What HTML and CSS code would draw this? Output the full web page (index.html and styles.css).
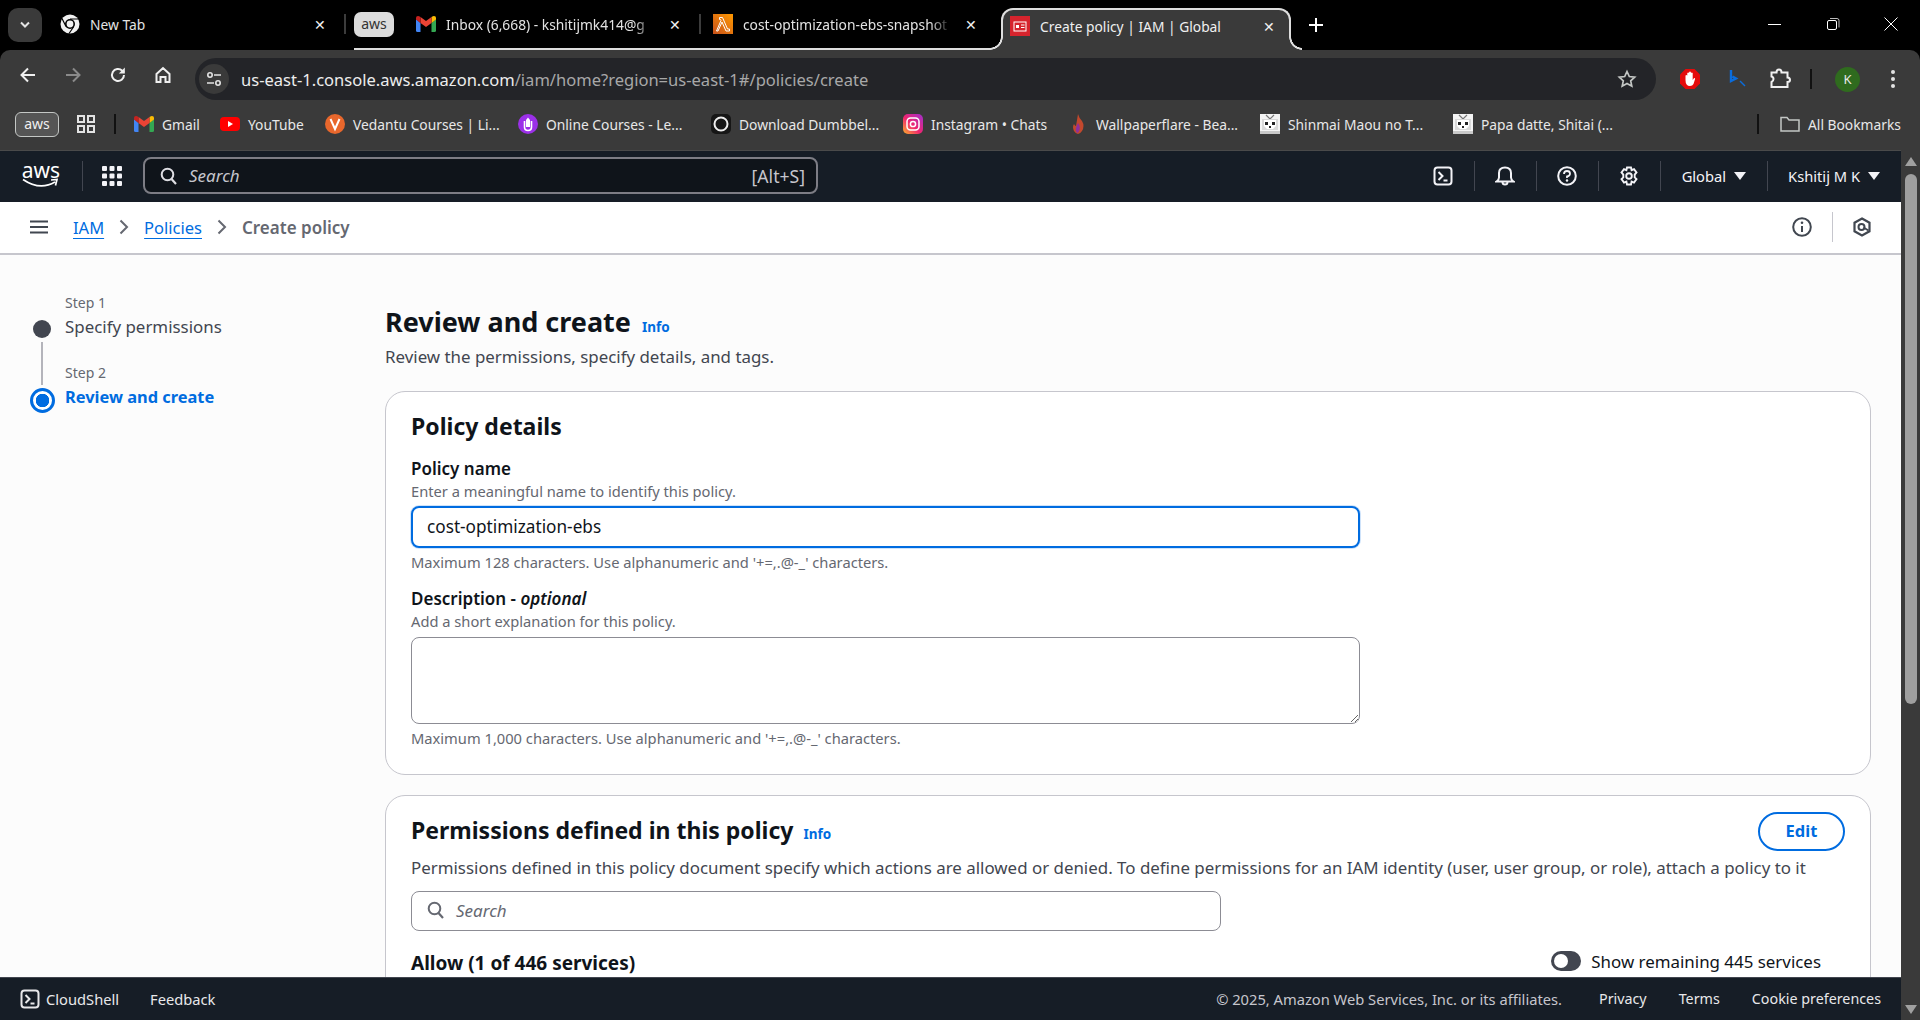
FILE: index.html
```html
<!DOCTYPE html>
<html lang="en">
<head>
  <meta charset="UTF-8" />
  <title>Create policy | IAM | Global</title>
  <link rel="stylesheet" href="styles.css">
</head>
<body>

<svg class="defs" width="0" height="0">
  <symbol id="gmail" viewBox="0 0 20 16">
    <path d="M0 3v11.500q0 1.500 1.500 1.500H4.500V7z" fill="#4285f4"/>
    <path d="M15.500 16h3q1.500 0 1.500-1.500V3l-4.500 4z" fill="#34a853"/>
    <path d="M15.500 1v6L20 3.500V2q0-2-2-2-1 0-2.500 1z" fill="#fbbc04"/>
    <path d="M4.500 7V1L10 5l5.500-4v6L10 11z" fill="#ea4335"/>
    <path d="M0 2v1.500L4.500 7V1Q3 0 2 0 0 0 0 2z" fill="#c5221f"/>
  </symbol>
  <symbol id="shell" viewBox="0 0 20 20">
    <rect x="1.500" y="1.500" width="17" height="17" rx="3" fill="none" stroke="currentColor" stroke-width="2"/>
    <path d="M5.500 6l4 4-4 4M10.500 14.500h4" fill="none" stroke="currentColor" stroke-width="2"/>
  </symbol>
  <symbol id="lens" viewBox="0 0 18 18">
    <circle cx="7.500" cy="7.500" r="5.800" fill="none" stroke="currentColor" stroke-width="2"/>
    <path d="M11.500 12l4.500 5" stroke="currentColor" stroke-width="2.200"/>
  </symbol>
  <symbol id="tv" viewBox="0 0 20 20">
    <rect width="20" height="20" fill="#f4f4f4"/>
    <path d="M6 1l4 4 4-4" fill="none" stroke="#777" stroke-width="1.200"/>
    <rect x="2" y="5" width="16" height="11" fill="#d9d9d9"/>
    <path d="M4 6h12v6l-3 3H7l-3-3z" fill="#fff"/>
    <rect x="5" y="8" width="3" height="3" fill="#222"/>
    <rect x="12" y="8" width="3" height="3" fill="#222"/>
    <rect x="9" y="12" width="2" height="2" fill="#222"/>
    <rect y="17" width="20" height="3" fill="#c9c9c9"/>
  </symbol>
</svg>

<header class="browser">
  <div class="tabstrip">
    <button class="tab-search">
      <svg width="12" height="8" viewBox="0 0 12 8"><path d="M2 1.500l4 4 4-4" fill="none" stroke="#e3e3e3" stroke-width="2"/></svg>
    </button>
    <div class="tab tab-first">
      <svg class="favicon" viewBox="0 0 20 20">
        <circle cx="10" cy="10" r="9.500" fill="#f1f1f1"/>
        <circle cx="10" cy="10" r="5" fill="#000"/>
        <circle cx="10" cy="10" r="3.400" fill="#f1f1f1"/>
        <path d="M10 5h8.500M6 12.500L2 4.500M13.500 13l-4.500 6.500" stroke="#000" stroke-width="1.200"/>
      </svg>
      <span class="tab-title">New Tab</span>
      <span class="tab-close">✕</span>
    </div>
    <div class="tab-sep"></div>
    <div class="tab-group">
      <span class="group-chip">aws</span>
      <div class="tab tab-gmail">
        <svg class="favicon favicon-gmail"><use href="#gmail"/></svg>
        <span class="tab-title tab-fade">Inbox (6,668) - kshitijmk414@g</span>
        <span class="tab-close">✕</span>
      </div>
      <div class="tab-sep"></div>
      <div class="tab tab-lambda">
        <svg class="favicon" viewBox="0 0 20 20">
          <defs><linearGradient id="lam" x1="0" y1="1" x2="1" y2="0"><stop offset="0" stop-color="#c8511b"/><stop offset="1" stop-color="#ff9900"/></linearGradient></defs>
          <rect width="20" height="20" fill="url(#lam)"/>
          <path d="M6.500 3.500h3l5 11.500h2v2h-3.500L9 8l-4 9H3.500L8 6.500 7.500 5.500h-1z" fill="none" stroke="#fff" stroke-width="1"/>
        </svg>
        <span class="tab-title tab-fade">cost-optimization-ebs-snapshot</span>
        <span class="tab-close">✕</span>
      </div>
    </div>
    <div class="tab tab-active">
      <svg class="favicon" viewBox="0 0 20 20">
        <rect width="20" height="20" fill="#d6242d"/>
        <rect x="4" y="6" width="12" height="9" fill="none" stroke="#fff"/>
        <rect x="6" y="9" width="3" height="3" fill="#fff"/>
        <path d="M11 9h3.500M11 11.500h3.500" stroke="#fff"/>
      </svg>
      <span class="tab-title">Create policy | IAM | Global</span>
      <span class="tab-close">✕</span>
    </div>
    <svg class="tab-new" width="14" height="14" viewBox="0 0 14 14"><path d="M7 0v14M0 7h14" stroke="#fff" stroke-width="2"/></svg>
    <div class="window-controls">
      <svg width="14" height="14" viewBox="0 0 14 14"><path d="M0 7.500h13" stroke="#fff"/></svg>
      <svg width="14" height="14" viewBox="0 0 14 14"><rect x="1.500" y="3.500" width="9" height="9" rx="1.500" fill="none" stroke="#fff"/><path d="M4 1.500h7q2 0 2 2v7" fill="none" stroke="#bbb"/></svg>
      <svg width="14" height="14" viewBox="0 0 14 14"><path d="M.5.500l13 13M13.500.500l-13 13" stroke="#fff"/></svg>
    </div>
  </div>

  <div class="toolbar">
    <svg class="tool" viewBox="0 0 18 18"><path d="M16 9H3M9 2.500L2.500 9 9 15.500" fill="none" stroke="#f0f0f0" stroke-width="2"/></svg>
    <svg class="tool" viewBox="0 0 18 18"><path d="M2 9h13M9 2.500L15.500 9 9 15.500" fill="none" stroke="#8a8a8a" stroke-width="2"/></svg>
    <svg class="tool" viewBox="0 0 18 18"><path d="M15 9a6 6 0 1 1-1.800-4.300L15 6.500" fill="none" stroke="#f0f0f0" stroke-width="2"/><path d="M15.800 1.500v6h-6z" fill="#f0f0f0"/></svg>
    <svg class="tool" viewBox="0 0 18 18"><path d="M2.500 8L9 2l6.500 6v8h-4v-5h-5v5h-4z" fill="none" stroke="#f0f0f0" stroke-width="2"/></svg>
    <div class="omnibox">
      <span class="site-info">
        <svg width="18" height="18" viewBox="0 0 18 18"><circle cx="5" cy="5" r="2.200" fill="none" stroke="#e3e3e3" stroke-width="1.600"/><path d="M9 5h7M2 13h7" stroke="#e3e3e3" stroke-width="1.600"/><circle cx="13" cy="13" r="2.200" fill="none" stroke="#e3e3e3" stroke-width="1.600"/></svg>
      </span>
      <span class="url">us-east-1.console.aws.amazon.com<span class="url-path">/iam/home?region=us-east-1#/policies/create</span></span>
      <svg class="star" width="20" height="20" viewBox="0 0 20 20"><path d="M10 2.500l2.300 5 5.400.6-4 3.700 1.100 5.400L10 14.500l-4.800 2.700 1.100-5.400-4-3.700 5.400-.6z" fill="none" stroke="#c4c7c5" stroke-width="1.700"/></svg>
    </div>
    <div class="extensions">
      <svg width="22" height="22" viewBox="0 0 22 22"><path d="M6.500 1h9L21 6.500v9L15.500 21h-9L1 15.500v-9z" fill="#e40b0b"/><path d="M6.500 12V7.500q1-1.200 1.800 0V11V5q1-1.200 1.800 0V11V4q1-1.200 1.800 0V11V5q1-1.200 1.800 0V12l1.200-1.800q1.300-.5 1.200.8L14.500 16q-1 2-3.500 2-4.500 0-4.500-6z" fill="#fff"/></svg>
      <svg width="22" height="22" viewBox="0 0 22 22"><path d="M6 2v11l5-2.500L7.500 8.500" fill="none" stroke="#0a6cdc" stroke-width="2.400"/><path d="M15 13l5 5" stroke="#0a6cdc" stroke-width="1.400"/></svg>
      <svg class="ext-puzzle" width="22" height="22" viewBox="0 0 22 22"><path d="M2.500 4.500h5q0-3 2.500-3t2.500 3h6v5q2.500 0 2.500 2.500s0 2-2.500 2v5h-16v-5q2-1 2-3t-2-2.500z" fill="none" stroke="#f0f0f0" stroke-width="2"/></svg>
      <span class="bar-sep"></span>
      <span class="avatar">K</span>
      <svg width="6" height="20" viewBox="0 0 6 20"><circle cx="3" cy="3" r="2" fill="#e3e3e3"/><circle cx="3" cy="10" r="2" fill="#e3e3e3"/><circle cx="3" cy="17" r="2" fill="#e3e3e3"/></svg>
    </div>
  </div>

  <div class="bookmarks">
    <span class="bm-chip">aws</span>
    <svg class="bm-grid" width="18" height="18" viewBox="0 0 18 18"><path d="M1 1h6v6H1zM11 1h6v6h-6zM1 11h6v6H1zM11 11h6v6h-6z" fill="none" stroke="#e3e3e3" stroke-width="2"/></svg>
    <span class="bar-sep bm-sep"></span>
    <a class="bm bm-gmail"><svg class="bm-icon"><use href="#gmail"/></svg>Gmail</a>
    <a class="bm bm-yt"><svg class="bm-icon" viewBox="0 0 20 20"><rect y="3" width="20" height="14" rx="4" fill="#f00"/><path d="M8 7l5 3-5 3z" fill="#fff"/></svg>YouTube</a>
    <a class="bm bm-ved"><svg class="bm-icon" viewBox="0 0 20 20"><circle cx="10" cy="10" r="10" fill="#e8672c"/><path d="M5.500 5L10 15l4.500-10" fill="none" stroke="#fff" stroke-width="2"/></svg>Vedantu Courses | Li...</a>
    <a class="bm bm-online"><svg class="bm-icon" viewBox="0 0 20 20"><circle cx="10" cy="10" r="10" fill="#9b30e8"/><path d="M6.500 7v6q0 3.500 3.500 3.500t3.500-3.500V7" fill="none" stroke="#fff" stroke-width="1.600"/><path d="M10 3.500l2 2.500v7H8V6z" fill="#fff"/></svg>Online Courses - Le...</a>
    <a class="bm bm-dumb"><svg class="bm-icon" viewBox="0 0 20 20"><rect width="20" height="20" rx="5" fill="#161616"/><circle cx="10" cy="10" r="6.500" fill="none" stroke="#eee" stroke-width="2"/></svg>Download Dumbbel...</a>
    <a class="bm bm-insta">
      <svg class="bm-icon" viewBox="0 0 20 20">
        <defs><linearGradient id="ig" x1="0" y1="1" x2="1" y2="0"><stop offset="0" stop-color="#fdb32a"/><stop offset=".45" stop-color="#f0256e"/><stop offset="1" stop-color="#a02fd0"/></linearGradient></defs>
        <rect width="20" height="20" rx="5" fill="url(#ig)"/><rect x="4" y="4" width="12" height="12" rx="3.500" fill="none" stroke="#fff" stroke-width="1.500"/><circle cx="10" cy="10" r="2.600" fill="none" stroke="#fff" stroke-width="1.500"/>
      </svg>Instagram • Chats</a>
    <a class="bm bm-wall"><svg class="bm-icon" viewBox="0 0 20 20"><path d="M10 0q1 4 4 7 3 5 0 10-2 3-4 3t-4-3q-2-4 0-7 1 2 2 2 1-6 2-12z" fill="#c2482d"/><path d="M10 9q3 4 1 8-1 2-2 2-3-3 1-10z" fill="#8e2f9c"/></svg>Wallpaperflare - Bea...</a>
    <a class="bm bm-shin"><svg class="bm-icon"><use href="#tv"/></svg>Shinmai Maou no T...</a>
    <a class="bm bm-papa"><svg class="bm-icon"><use href="#tv"/></svg>Papa datte, Shitai (...</a>
    <span class="bar-sep bm-sep-end"></span>
    <a class="bm bm-all"><svg class="bm-icon" viewBox="0 0 20 20"><path d="M1 3.500h6l2 2.500h10v11H1z" fill="none" stroke="#c4c7c5" stroke-width="1.500"/></svg>All Bookmarks</a>
  </div>
</header>

<div class="console">
  <div class="console-main">
    <nav class="topnav">
      <div class="aws-logo">
        <span>aws</span>
        <svg width="38" height="10" viewBox="0 0 38 10"><path d="M1 1.500Q18 13 33 4M29 2l6-.5-1.500 6" fill="none" stroke="#fff" stroke-width="1.700"/></svg>
      </div>
      <span class="nav-sep nav-sep-logo"></span>
      <svg class="services" width="20" height="20" viewBox="0 0 20 20"><g fill="#f3f3f7"><rect width="5" height="5" rx="1"/><rect x="7.500" width="5" height="5" rx="1"/><rect x="15" width="5" height="5" rx="1"/><rect y="7.500" width="5" height="5" rx="1"/><rect x="7.500" y="7.500" width="5" height="5" rx="1"/><rect x="15" y="7.500" width="5" height="5" rx="1"/><rect y="15" width="5" height="5" rx="1"/><rect x="7.500" y="15" width="5" height="5" rx="1"/><rect x="15" y="15" width="5" height="5" rx="1"/></g></svg>
      <div class="nav-search">
        <svg class="lens" width="18" height="18"><use href="#lens"/></svg>
        <span class="nav-search-text">Search</span>
        <span class="nav-search-key">[Alt+S]</span>
      </div>
      <div class="nav-right">
        <svg class="nav-icon" width="20" height="20"><use href="#shell"/></svg>
        <span class="nav-sep"></span>
        <svg class="nav-icon" width="20" height="20" viewBox="0 0 20 20"><path d="M1.500 15.500q2.500-1.500 2.500-4V7q0-5.500 6-5.500T16 7v4.500q0 2.500 2.500 4z" fill="none" stroke="currentColor" stroke-width="2"/><path d="M7.500 16q0 2.500 2.500 2.500t2.500-2.500" fill="none" stroke="currentColor" stroke-width="2"/></svg>
        <span class="nav-sep"></span>
        <svg class="nav-icon" width="20" height="20" viewBox="0 0 20 20"><circle cx="10" cy="10" r="8.800" fill="none" stroke="currentColor" stroke-width="2"/><path d="M7 8q0-3 3-3t3 2.500-3 3V12" fill="none" stroke="currentColor" stroke-width="1.800"/><circle cx="10" cy="14.500" r="1.200" fill="currentColor"/></svg>
        <span class="nav-sep"></span>
        <svg class="nav-icon" width="20" height="20" viewBox="0 0 20 20"><path d="M8 1.500h4l.6 2.600 2.400-1 2.500 3.400-1.800 2 .0 2.800 1.800 1.800-2.500 3.500-2.400-1-.6 2.900H8l-.6-2.900-2.400 1-2.500-3.500 1.800-1.800V8.500l-1.800-2L5 3.100l2.400 1z" fill="none" stroke="currentColor" stroke-width="1.900"/><circle cx="10" cy="10" r="2.800" fill="none" stroke="currentColor" stroke-width="1.900"/></svg>
        <span class="nav-sep"></span>
        <span class="nav-menu nav-region">Global <i class="caret"></i></span>
        <span class="nav-sep"></span>
        <span class="nav-menu nav-user">Kshitij M K <i class="caret"></i></span>
      </div>
    </nav>

    <div class="crumbs">
      <svg class="hamburger" width="18" height="14" viewBox="0 0 18 14"><path d="M0 1.500h18M0 7h18M0 12.500h18" stroke="#414750" stroke-width="2"/></svg>
      <a class="crumb-link crumb-iam">IAM</a>
      <svg class="crumb-arrow" width="10" height="16" viewBox="0 0 10 16"><path d="M1.500 1.500L8 8l-6.500 6.500" fill="none" stroke="#656871" stroke-width="2"/></svg>
      <a class="crumb-link">Policies</a>
      <svg class="crumb-arrow" width="10" height="16" viewBox="0 0 10 16"><path d="M1.500 1.500L8 8l-6.500 6.500" fill="none" stroke="#656871" stroke-width="2"/></svg>
      <span class="crumb-here">Create policy</span>
      <div class="crumbs-right">
        <svg width="20" height="20" viewBox="0 0 20 20"><circle cx="10" cy="10" r="8.800" fill="none" stroke="#414750" stroke-width="2"/><path d="M10 9v6" stroke="#414750" stroke-width="2"/><circle cx="10" cy="5.800" r="1.300" fill="#414750"/></svg>
        <span class="crumbs-sep"></span>
        <svg width="20" height="20" viewBox="0 0 20 20"><path d="M10 1.500l7.500 4.200v8.600L10 18.500l-7.500-4.200V5.700z" fill="none" stroke="#414750" stroke-width="2.200"/><circle cx="9.500" cy="10" r="3" fill="none" stroke="#414750" stroke-width="2"/><path d="M11.500 10.500l5 3" stroke="#414750" stroke-width="2"/></svg>
      </div>
    </div>

    <div class="page">
      <aside class="steps">
        <div class="step step-done">
          <span class="step-label">Step 1</span>
          <i class="step-dot"></i>
          <span class="step-name">Specify permissions</span>
        </div>
        <div class="step step-current">
          <span class="step-label">Step 2</span>
          <i class="step-dot"></i>
          <span class="step-name">Review and create</span>
        </div>
      </aside>

      <main class="content">
        <h1 class="page-title">Review and create <a class="info">Info</a></h1>
        <p class="page-sub">Review the permissions, specify details, and tags.</p>

        <section class="card card-details">
          <h2>Policy details</h2>
          <div class="field">
            <label for="policyName">Policy name</label>
            <p class="hint">Enter a meaningful name to identify this policy.</p>
            <input id="policyName" class="text-input" type="text" value="cost-optimization-ebs" />
            <p class="hint hint-after">Maximum 128 characters. Use alphanumeric and '+=,.@-_' characters.</p>
          </div>
          <div class="field">
            <label for="policyDesc">Description - <em>optional</em></label>
            <p class="hint">Add a short explanation for this policy.</p>
            <textarea id="policyDesc" class="text-area"></textarea>
            <p class="hint hint-after">Maximum 1,000 characters. Use alphanumeric and '+=,.@-_' characters.</p>
          </div>
        </section>

        <section class="card card-perms">
          <div class="card-head">
            <h2>Permissions defined in this policy <a class="info">Info</a></h2>
            <button class="btn-edit">Edit</button>
          </div>
          <p class="perms-text">Permissions defined in this policy document specify which actions are allowed or denied. To define permissions for an IAM identity (user, user group, or role), attach a policy to it</p>
          <div class="perm-search">
            <svg width="18" height="18"><use href="#lens"/></svg>
            <span>Search</span>
          </div>
          <div class="allow-row">
            <h3>Allow (1 of 446 services)</h3>
            <div class="toggle-wrap"><i class="toggle"></i>Show remaining 445 services</div>
          </div>
        </section>
      </main>
    </div>

    <footer class="footer">
      <svg class="footer-shell" width="20" height="20"><use href="#shell"/></svg>
      <span class="footer-cs">CloudShell</span>
      <span class="footer-fb">Feedback</span>
      <span class="footer-copy">© 2025, Amazon Web Services, Inc. or its affiliates.</span>
      <a>Privacy</a>
      <a>Terms</a>
      <a>Cookie preferences</a>
    </footer>
  </div>

  <div class="scrollbar">
    <i class="sb-up"></i>
    <div class="sb-track"><div class="sb-thumb"></div></div>
    <i class="sb-down"></i>
  </div>
</div>

</body>
</html>
```

FILE: styles.css
```css
* {
  box-sizing: border-box;
}

html, body {
  margin: 0;
  height: 100%;
}

body {
  display: flex;
  flex-direction: column;
  height: 1020px;
  overflow: hidden;
  font-family: "Noto Sans", sans-serif;
  background: #000;
  color: #0f141a;
}

.defs {
  position: absolute;
}

p, h1, h2, h3 {
  margin: 0;
}

/* browser chrome */
.browser {
  height: 150px;
  flex: none;
  font-size: 13.8px;
  color: #e3e3e3;
}

.tabstrip {
  height: 50px;
  display: flex;
  background: #000;
}

.tab-search {
  width: 34px;
  height: 34px;
  margin: 8px 8px 0;
  border: none;
  border-radius: 10px;
  background: #3a3a3a;
  display: flex;
  align-items: center;
  justify-content: center;
}

.tab {
  height: 48px;
  display: flex;
  align-items: center;
  position: relative;
}

.tab-first {
  width: 294px;
  padding-left: 10px;
}

.favicon {
  width: 20px;
  height: 20px;
  flex: none;
}

.favicon-gmail {
  height: 16px;
}

.tab-title {
  margin-left: 10px;
  flex: 1;
  white-space: nowrap;
  overflow: hidden;
}

.tab-fade {
  -webkit-mask-image: linear-gradient(to right, #000 90%, transparent);
  mask-image: linear-gradient(to right, #000 90%, transparent);
}

.tab-close {
  width: 16px;
  margin: 0 16px 0 12px;
  text-align: center;
  font-size: 14px;
  color: #f0f0f0;
}

.tab-sep {
  width: 2px;
  height: 20px;
  margin-top: 14px;
  background: #3c3c3c;
}

.tab-group {
  display: flex;
  height: 50px;
  margin-left: 8px;
  width: 636px;
  border-bottom: 2px solid #dedede;
}

.group-chip {
  width: 40px;
  height: 25px;
  margin-top: 12px;
  border-radius: 7px;
  background: #dcdcdc;
  color: #333;
  font-size: 14px;
  line-height: 24px;
  text-align: center;
}

.tab-gmail {
  width: 305px;
  padding-left: 22px;
}

.tab-lambda {
  width: 287px;
  padding-left: 12px;
}

.tab-lambda .tab-close {
  margin-right: 9px;
}

.tab-active {
  width: 290px;
  height: 42px;
  margin: 8px 15px 0 11px;
  padding: 0 0 8px 7px;
  background: #3a3a3a;
  border: 2px solid #dedede;
  border-bottom: none;
  border-radius: 12px 12px 0 0;
  color: #f0f0f0;
}

.tab-active::before,
.tab-active::after {
  content: "";
  position: absolute;
  bottom: 0;
  width: 13px;
  height: 13px;
}

.tab-active::before {
  left: -13px;
  background: radial-gradient(circle at 0 0, #000 10.5px, #dedede 11px, #dedede 12.500px, #3a3a3a 13px);
}

.tab-active::after {
  right: -13px;
  background: radial-gradient(circle at 100% 0, #000 10.5px, #dedede 11px, #dedede 12.500px, #3a3a3a 13px);
}

.tab-active .tab-close {
  margin: 0 12px 0 0;
}

.tab-new {
  margin: 18px 0 0 3px;
}

.window-controls {
  margin-left: auto;
  display: flex;
  gap: 44px;
  padding: 17px 22px 0 0;
}

.toolbar {
  height: 50px;
  display: flex;
  align-items: center;
  padding-left: 19px;
  background: #3a3a3a;
  border-radius: 10px 10px 0 0;
}

.tool {
  width: 18px;
  height: 18px;
  margin-right: 27px;
  flex: none;
}

.omnibox {
  width: 1461px;
  height: 42px;
  margin-top: 8px;
  margin-left: -4px;
  padding: 0 19px 0 2px;
  display: flex;
  align-items: center;
  border-radius: 21px;
  background: #232428;
}

.site-info {
  width: 30px;
  height: 30px;
  margin-left: 2px;
  border-radius: 50%;
  background: #3a3a3a;
  display: flex;
  align-items: center;
  justify-content: center;
}

.url {
  margin-left: 12px;
  font-size: 16.55px;
  color: #ededed;
  white-space: nowrap;
}

.url-path {
  color: #a8a8a8;
}

.star {
  margin-left: auto;
}

.extensions {
  display: flex;
  align-items: center;
  margin-left: 23px;
  gap: 24px;
  margin-top: 8px;
}

.ext-puzzle {
  margin-left: -2px;
}

.bar-sep {
  width: 2px;
  height: 20px;
  background: #111;
}

.extensions .bar-sep {
  margin: 0 -1px 0 -5px;
}

.avatar {
  width: 25px;
  height: 25px;
  margin: 0 6px 0 0;
  border-radius: 50%;
  background: #2f6b1e;
  color: #e8e8e8;
  font-size: 13px;
  line-height: 25px;
  text-align: center;
}

.bookmarks {
  height: 50px;
  display: flex;
  align-items: center;
  padding: 0 0 2px 15px;
  background: #3a3a3a;
  white-space: nowrap;
}

.bm-chip {
  width: 44px;
  height: 25px;
  border: 1px solid #c4c7c5;
  border-radius: 6px;
  background: #555;
  font-size: 14px;
  line-height: 22px;
  text-align: center;
  color: #f0f0f0;
}

.bm-grid {
  margin-left: 18px;
}

.bm-sep {
  margin: 0 18px 0 19px;
}

.bm {
  display: flex;
  align-items: center;
  gap: 8px;
  font-size: 13.8px;
  color: #e8e8e8;
}

.bm-icon {
  width: 20px;
  height: 20px;
  flex: none;
}

.bm-gmail .bm-icon {
  height: 16px;
}

.bm-gmail { width: 86px; }
.bm-yt { width: 105px; }
.bm-ved { width: 193px; }
.bm-online { width: 193px; }
.bm-dumb { width: 192px; }
.bm-insta { width: 165px; }
.bm-wall { width: 192px; }
.bm-shin { width: 193px; }
.bm-papa { width: 304px; }
.bm-all { margin-left: 21px; }

/* aws console */
.console {
  flex: 1;
  min-height: 0;
  display: flex;
}

.console-main {
  flex: 1;
  min-width: 0;
  display: flex;
  flex-direction: column;
  background: #fcfcfc;
}

.topnav {
  height: 52px;
  flex: none;
  display: flex;
  align-items: center;
  padding: 0 0 2px 22px;
  background: #161d26;
  border-top: 1px solid #4a4a4a;
  color: #f3f3f7;
  font-size: 14.7px;
}

.aws-logo {
  width: 38px;
  display: flex;
  flex-direction: column;
  align-items: center;
  color: #fff;
  font-size: 21px;
  line-height: 15px;
}

.nav-sep {
  width: 1px;
  height: 30px;
  background: #424650;
}

.nav-sep-logo {
  margin-left: 22px;
}

.services {
  margin: 0 21px 0 19px;
}

.nav-search {
  width: 675px;
  height: 37px;
  padding: 0 11px 0 15px;
  display: flex;
  align-items: center;
  border: 2px solid #7d7d85;
  border-radius: 8px;
  background: #0f141a;
  color: #c6c6cd;
  font-size: 17px;
}

.lens {
  color: #dedee3;
}

.nav-search-text {
  margin-left: 11px;
  font-style: italic;
}

.nav-search-key {
  margin-left: auto;
  font-size: 17.6px;
}

.nav-right {
  display: flex;
  align-items: center;
  margin-left: auto;
  padding-right: 21px;
}

.nav-icon {
  flex: none;
  margin: 0 20.5px;
  color: #f3f3f7;
}

.nav-menu {
  display: flex;
  align-items: center;
  gap: 8px;
}

.nav-region {
  padding: 0 21px;
}

.nav-user {
  padding-left: 20px;
}

.caret {
  width: 0;
  height: 0;
  border-left: 6px solid transparent;
  border-right: 6px solid transparent;
  border-top: 8px solid #f3f3f7;
}

.crumbs {
  height: 53px;
  flex: none;
  display: flex;
  align-items: center;
  padding: 0 29px 1px 30px;
  background: #fff;
  border-bottom: 2px solid #c6c6cd;
  font-size: 17px;
}

.hamburger {
  margin-right: 25px;
}

.crumb-link {
  font-size: 16.5px;
  color: #006ce0;
  text-decoration: underline;
  text-underline-offset: 4px;
}

.crumb-arrow {
  margin: 0 15px;
}

.crumb-here {
  font-weight: 600;
  color: #656871;
}

.crumbs-right {
  margin-left: auto;
  display: flex;
  align-items: center;
}

.crumbs-sep {
  width: 1px;
  height: 30px;
  margin: 0 19px 0 20px;
  background: #c6c6cd;
}

/* page */
.page {
  flex: 1;
  min-height: 0;
  overflow: hidden;
  display: flex;
}

.steps {
  width: 385px;
  flex: none;
  padding: 38px 0 0 30px;
}

.step {
  position: relative;
  display: grid;
  grid-template-columns: 24px 1fr;
  column-gap: 11px;
  height: 70px;
  align-content: start;
}

.step-label {
  grid-column: 2;
  font-size: 14px;
  line-height: 20px;
  color: #656871;
}

.step-name {
  grid-column: 2;
  margin-top: 2px;
  font-size: 16.9px;
  line-height: 24px;
  color: #424650;
}

.step-dot {
  grid-column: 1;
  grid-row: 2;
  align-self: center;
  justify-self: center;
  margin-top: 5px;
  border-radius: 50%;
}

.step-done .step-dot {
  width: 18px;
  height: 18px;
  background: #424650;
}

.step-done::after {
  content: "";
  position: absolute;
  left: 11px;
  top: 49px;
  width: 2px;
  height: 43px;
  background: #b4b4bb;
}

.step-current .step-dot {
  width: 25px;
  height: 25px;
  border: 3px solid #006ce0;
  background: radial-gradient(circle, #006ce0 6.5px, #fff 7px);
}

.step-current .step-name {
  font-size: 16.4px;
  font-weight: 700;
  color: #006ce0;
}

.content {
  width: 1486px;
  flex: none;
  padding-top: 49px;
}

.page-title {
  height: 36px;
  font-size: 27px;
  line-height: 36px;
  font-weight: 700;
  color: #0f141a;
}

.info {
  margin-left: 4px;
  font-size: 13.5px;
  font-weight: 700;
  color: #006ce0;
}

.page-sub {
  margin-top: 6px;
  font-size: 16.9px;
  line-height: 22px;
  color: #424650;
}

.card {
  background: #fff;
  border: 1px solid #c6c6cd;
  border-radius: 20px;
  padding: 0 25px;
}

.card-details {
  margin-top: 23px;
  height: 384px;
  padding-top: 18px;
}

.card h2 {
  height: 32px;
  font-size: 23px;
  line-height: 32px;
  font-weight: 700;
}

.field {
  margin-top: 16px;
}

.field label {
  display: block;
  font-size: 17px;
  line-height: 22px;
  font-weight: 600;
}

.field em {
  font-weight: 600;
}

.hint {
  margin-top: 1px;
  font-size: 14.7px;
  line-height: 20px;
  color: #656871;
}

.hint-after {
  margin-top: 4px;
}

.text-input {
  display: block;
  width: 949px;
  height: 42px;
  margin-top: 5px;
  padding: 0 14px 2px;
  border: 2px solid #006ce0;
  border-radius: 8px;
  box-shadow: 0 0 0 1px #cfe3fa;
  outline: none;
  font: 17.2px "Noto Sans", sans-serif;
  color: #0f141a;
}

.text-area {
  display: block;
  width: 949px;
  height: 87px;
  margin-top: 6px;
  border: 1px solid #8c8c94;
  border-radius: 8px;
  outline: none;
}

.card-perms {
  margin-top: 20px;
  height: 300px;
  padding-top: 16px;
}

.card-head {
  display: flex;
  align-items: center;
  justify-content: space-between;
  height: 39px;
}

.card-head h2 {
  margin-top: -3px;
}

.btn-edit {
  width: 87px;
  height: 39px;
  padding-bottom: 3px;
  border: 2px solid #006ce0;
  border-radius: 20px;
  background: #fff;
  color: #006ce0;
  font: 700 16.5px "Noto Sans", sans-serif;
}

.perms-text {
  margin-top: 6px;
  font-size: 16.9px;
  line-height: 22px;
  color: #424650;
  white-space: nowrap;
}

.perm-search {
  width: 810px;
  height: 40px;
  margin-top: 12px;
  padding: 0 0 2px 15px;
  display: flex;
  align-items: center;
  gap: 11px;
  border: 1px solid #8c8c94;
  border-radius: 8px;
  color: #656871;
  font-size: 17px;
  font-style: italic;
}

.allow-row {
  display: flex;
  justify-content: space-between;
  margin-top: 20px;
  padding-right: 24px;
}

.allow-row h3 {
  font-size: 19px;
  line-height: 24px;
  font-weight: 700;
}

.toggle-wrap {
  display: flex;
  align-items: center;
  gap: 10px;
  height: 20px;
  font-size: 16.9px;
}

.toggle {
  width: 30px;
  height: 20px;
  padding: 3px;
  border-radius: 10px;
  background: #424650;
  display: block;
}

.toggle::after {
  content: "";
  display: block;
  width: 14px;
  height: 14px;
  border-radius: 50%;
  background: #fff;
}

.footer {
  height: 43px;
  flex: none;
  display: flex;
  align-items: center;
  padding: 0 20px 1px;
  background: #161d26;
  border-top: 1px solid #424650;
  color: #e8e8ea;
  font-size: 14.7px;
}

.footer-cs {
  margin-left: 6px;
}

.footer-fb {
  margin-left: 31px;
}

.footer-copy {
  margin-left: auto;
  margin-right: 37px;
  color: #c6c6cd;
}

.footer a {
  margin-left: 32px;
  font-size: 14.3px;
}

.footer-copy + a {
  margin-left: 0;
}

/* page scrollbar */
.scrollbar {
  width: 19px;
  flex: none;
  display: flex;
  flex-direction: column;
  align-items: center;
  background: #3a3a3a;
  padding: 7px 0 6px;
}

.sb-up, .sb-down {
  width: 0;
  height: 0;
  border-left: 6px solid transparent;
  border-right: 6px solid transparent;
}

.sb-up {
  border-bottom: 9px solid #a0a0a0;
}

.sb-down {
  border-top: 9px solid #a0a0a0;
}

.sb-track {
  flex: 1;
  width: 100%;
  padding: 8px 3px 0 4px;
}

.sb-thumb {
  height: 530px;
  border-radius: 6px;
  background: #9f9f9f;
}
```
